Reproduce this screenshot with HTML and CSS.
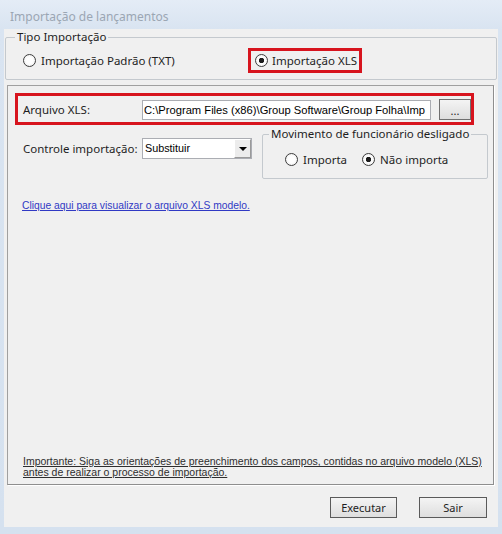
FILE: index.html
```html
<!DOCTYPE html>
<html lang="pt-BR">
<head>
    <meta charset="UTF-8" />
    <title>Importação de lançamentos</title>
    <link rel="stylesheet" href="styles.css">
</head>
<body>
<div class="window">
    <div class="window__title">Importação de lançamentos</div>

    <div class="window__client">
        <fieldset class="group group--tipo">
            <legend>Tipo Importação</legend>
            <div class="tipo__options">
                <label class="radio-opt"><span class="radio"></span>Importação Padrão (TXT)</label>
                <label class="radio-opt radio-opt--marked"><span class="radio radio--on"></span>Importação XLS</label>
            </div>
        </fieldset>

        <div class="panel">
            <div class="file-row">
                <span class="field-label">Arquivo XLS:</span>
                <div class="textbox">C:\Program Files (x86)\Group Software\Group Folha\Imp</div>
                <button class="btn btn--browse">...</button>
            </div>

            <div class="options-row">
                <div class="control-row">
                    <span class="field-label">Controle importação:</span>
                    <div class="combo">
                        <span class="combo__value">Substituir</span>
                        <span class="combo__arrow"></span>
                    </div>
                </div>
                <fieldset class="group group--mov">
                    <legend>Movimento de funcionário desligado</legend>
                    <div class="mov__options">
                        <label class="radio-opt"><span class="radio"></span>Importa</label>
                        <label class="radio-opt"><span class="radio radio--on"></span>Não importa</label>
                    </div>
                </fieldset>
            </div>

            <a class="link" href="#">Clique aqui para visualizar o arquivo XLS modelo.</a>

            <p class="note">Importante: Siga as orientações de preenchimento dos campos, contidas no arquivo modelo (XLS)<br>antes de realizar o processo de importação.</p>
        </div>

        <div class="footer">
            <button class="btn btn--exec">Executar</button>
            <button class="btn btn--exit">Sair</button>
        </div>
    </div>
</div>
</body>
</html>
```

FILE: styles.css
```css
*,
*::before,
*::after {
    box-sizing: border-box;
}

html,
body {
    margin: 0;
    padding: 0;
}

body {
    width: 502px;
    height: 534px;
    overflow: hidden;
    font-family: 'Noto Sans', sans-serif;
    font-size: 11.5px;
    color: #1e1e1e;
    background: #d8e3f0;
}

.window {
    width: 502px;
    height: 534px;
    background: linear-gradient(180deg, #e4ecf6 0, #d9e4f1 29px, #d5e1ef 100%);
}

.window__title {
    height: 29px;
    padding: 9px 0 0 10px;
    font-size: 12px;
    line-height: 16px;
    color: #9ba6b3;
}

.window__client {
    margin: 0 4px;
    height: 498px;
    background: #f0f0f0;
    display: flex;
    flex-direction: column;
}

/* group boxes */
.group {
    margin: 0;
    min-width: 0;
    border: 1px solid #c4c9ce;
    border-radius: 2px;
}
.group legend {
    padding: 0 2px;
    line-height: 16px;
}
.group--tipo {
    margin: 0 1px;
    padding: 3px 0 6px 9px;
}
.tipo__options {
    display: flex;
    align-items: center;
    margin-left: 8px;
    height: 25px;
}
.tipo__options .radio-opt:first-child {
    width: 225px;
}

.radio-opt {
    display: inline-flex;
    align-items: center;
    gap: 5px;
    white-space: nowrap;
}
.radio-opt--marked {
    height: 25px;
    padding: 0 2px 0 4px;
    gap: 4px;
    border: 3px solid #d7141e;
}
.radio {
    flex: none;
    width: 13px;
    height: 13px;
    border: 1px solid #3d3d3d;
    border-radius: 50%;
    background: radial-gradient(circle, #ffffff 40%, #e6e6e6 100%);
}
.radio--on {
    background: radial-gradient(circle, #1c1c1c 0, #1c1c1c 2.4px, #ffffff 3px, #ececec 100%);
}

/* main panel */
.panel {
    margin: 5px 4px 0 3px;
    height: 400px;
    border: 1px solid;
    border-color: #a0a0a0 #8e8e8e #8e8e8e #a0a0a0;
    box-shadow: 1px 1px 0 #ffffff;
    display: flex;
    flex-direction: column;
    align-items: flex-start;
}

.file-row {
    align-self: stretch;
    margin: 7px 19px 0 7px;
    height: 32px;
    padding-left: 5px;
    border: 3px solid #d7141e;
    display: flex;
    align-items: center;
}
.field-label {
    flex: 0 0 119px;
    white-space: nowrap;
}
.textbox {
    width: 289px;
    height: 20px;
    margin-top: 2px;
    padding-left: 1px;
    border: 1px solid #abadb3;
    background: #fff;
    font-family: 'Liberation Sans', sans-serif;
    font-size: 11.2px;
    line-height: 18px;
    color: #000;
    white-space: nowrap;
    overflow: hidden;
}

.btn {
    height: 21px;
    padding: 0;
    border: 1px solid #5a5a5a;
    background: linear-gradient(180deg, #f4f4f4 0%, #e9e9e9 50%, #dedede 100%);
    font-family: 'Noto Sans', sans-serif;
    font-size: 11px;
    color: #1e1e1e;
}
.btn--browse {
    width: 32px;
    margin-left: 8px;
    border-color: #707070;
    line-height: 14px;
    padding-top: 4px;
}

.options-row {
    display: flex;
    align-items: flex-start;
    margin: 1px 0 0 15px;
}
.control-row {
    display: flex;
    align-items: center;
    height: 21px;
    margin-top: 12px;
}
.combo {
    width: 110px;
    height: 21px;
    border: 1px solid #abadb3;
    background: #fff;
    display: flex;
}
.combo__value {
    flex: 1;
    padding-left: 2px;
    font-family: 'Liberation Sans', sans-serif;
    font-size: 10.8px;
    line-height: 19px;
    color: #000;
}
.combo__arrow {
    width: 17px;
    border: 1px solid;
    border-color: #ffffff #9a9a9a #9a9a9a #ffffff;
    background: #ececec;
    display: flex;
    align-items: center;
    justify-content: center;
}
.combo__arrow::before {
    content: '';
    border-left: 4px solid transparent;
    border-right: 4px solid transparent;
    border-top: 4px solid #000;
}

.group--mov {
    width: 226px;
    margin-left: 10px;
    padding: 9px 0 11px 6px;
}
.mov__options {
    display: flex;
    align-items: center;
    gap: 15px;
    margin-left: 16px;
    height: 16px;
}

.link {
    margin: 20px 0 0 14px;
    font-family: 'Liberation Sans', sans-serif;
    font-size: 10.3px;
    line-height: 14px;
    color: #3039c4;
}

.note {
    margin: auto 0 6px 15px;
    font-family: 'Liberation Sans', sans-serif;
    font-size: 10.5px;
    line-height: 11px;
    color: #2e2e2e;
    text-decoration: underline;
}

.footer {
    display: flex;
    justify-content: flex-end;
    gap: 22px;
    margin-top: 12px;
    padding-right: 11px;
}
.btn--exec {
    width: 67px;
}
.btn--exit {
    width: 68px;
}
```
